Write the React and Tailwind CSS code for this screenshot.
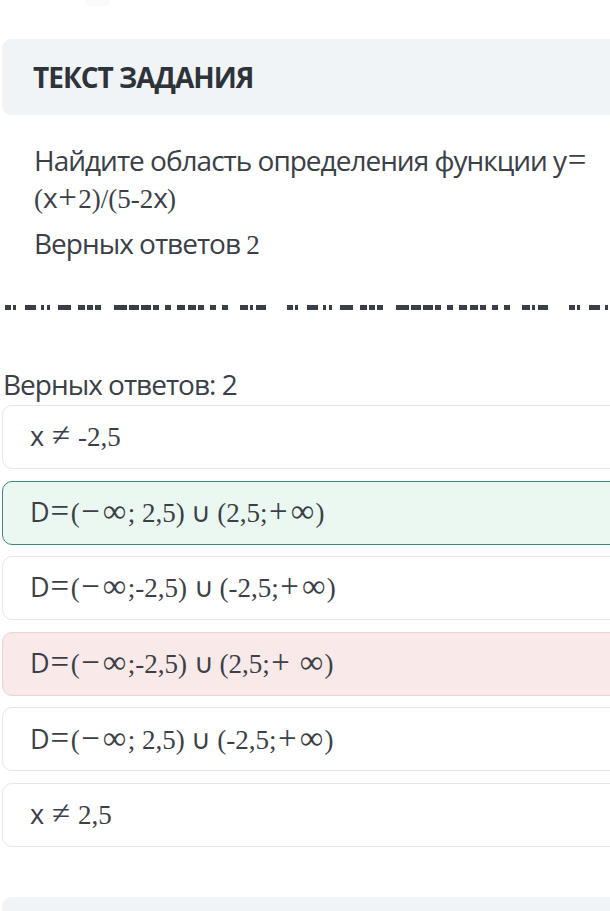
import React from 'react';

// math pieces: serif digits, wide operators like the formula font in the screenshot
const M = ({ children }) => (
  <span className="font-['Liberation_Serif','DejaVu_Serif',serif] text-[27px] tracking-normal">
    {children.split('').map((ch, i) => {
      if ('=+−≠'.includes(ch)) return <span key={i} className="mx-[1.5px] text-[1.22em] leading-none">{ch}</span>;
      if (ch === '∞') return <span key={i} className="mx-[1.5px] text-[1.22em] leading-none">{ch}</span>;
      return ch;
    })}
  </span>
);

// garbled strip under the question, drawn as short dark bars: [left, width]
const dashes = [
  [5, 6], [13, 3], [25, 11], [41, 3], [47, 3], [58, 13], [78, 7], [87, 6], [95, 6],
  [114, 13], [129, 10], [141, 10], [153, 6], [165, 6], [177, 8], [188, 8], [198, 6],
  [210, 6], [222, 6], [240, 8], [250, 3], [256, 10],
];

const options = [
  { key: 1, state: 'none', body: <>x <M>≠ -2,5</M></> },
  { key: 2, state: 'right', body: <>D<M>=(−∞; 2,5)</M> ∪ <M>(2,5;+∞)</M></> },
  { key: 3, state: 'none', body: <>D<M>=(−∞;-2,5)</M> ∪ <M>(-2,5;+∞)</M></> },
  { key: 4, state: 'wrong', body: <>D<M>=(−∞;-2,5)</M> ∪ <M>(2,5;+ ∞)</M></> },
  { key: 5, state: 'none', body: <>D<M>=(−∞; 2,5)</M> ∪ <M>(-2,5;+∞)</M></> },
  { key: 6, state: 'none', body: <>x <M>≠ 2,5</M></> },
];

const boxStyle = {
  none: 'bg-white border-[#e4e8eb]',
  right: 'bg-[#ebf8f2] border-[#3f8979]',
  wrong: 'bg-[#f9e9e9] border-[#ecd3d3]',
};

const DashGroup = () => {
  let x = 0;
  return (
    <div className="flex items-center shrink-0 w-[282px]">
      {dashes.map(([left, w], i) => {
        const gap = left - x;
        x = left + w;
        return (
          <span
            key={i}
            className="block h-[5px] bg-[#3a3f45] shrink-0"
            style={{ marginLeft: gap, width: w }}
          />
        );
      })}
    </div>
  );
};

export default function App() {
  return (
    <div className="w-[610px] h-[911px] overflow-hidden bg-white text-[#3b4047] font-['Open_Sans','Noto_Sans',sans-serif]">
      <div className="h-[39px] relative">
        <span className="absolute left-[86px] top-0 w-[24px] h-[6px] rounded-b bg-[#f8f9fa]" />
      </div>

      <div className="ml-[2px] w-[640px] h-[76px] rounded-[9px] bg-[#f1f4f6] flex items-center pl-[31px]">
        <h1 className="text-[28px] font-bold text-[#2d3339] tracking-[-1px]">ТЕКСТ ЗАДАНИЯ</h1>
      </div>

      <div className="pl-[34px] pt-[28px] text-[28px] leading-[35px] tracking-[-1px]">
        <p>
          Найдите область определения функции y<M>=</M>
          <br />
          <M>(</M>x<M>+2)/(5-2</M>x<M>)</M>
        </p>
        <p className="mt-[9px]">Верных ответов <M>2</M></p>
      </div>

      <div className="flex items-center mt-[42px] h-[5px]">
        <DashGroup />
        <DashGroup />
        <DashGroup />
      </div>

      <p className="pl-[3px] mt-[59px] text-[28px] leading-[30px] tracking-[-1px]">Верных ответов: 2</p>

      <div className="ml-[2px] w-[640px] mt-[6px] flex flex-col gap-[11.6px]">
        {options.map(o => (
          <div
            key={o.key}
            className={`h-[64px] rounded-[10px] border flex items-center pl-[27px] text-[27px] tracking-[-0.5px] ${boxStyle[o.state]}`}
          >
            <span>{o.body}</span>
          </div>
        ))}
      </div>

      <div className="ml-[2px] w-[640px] mt-[50px] h-[40px] rounded-[9px] bg-[#f1f4f6]" />
    </div>
  );
}
